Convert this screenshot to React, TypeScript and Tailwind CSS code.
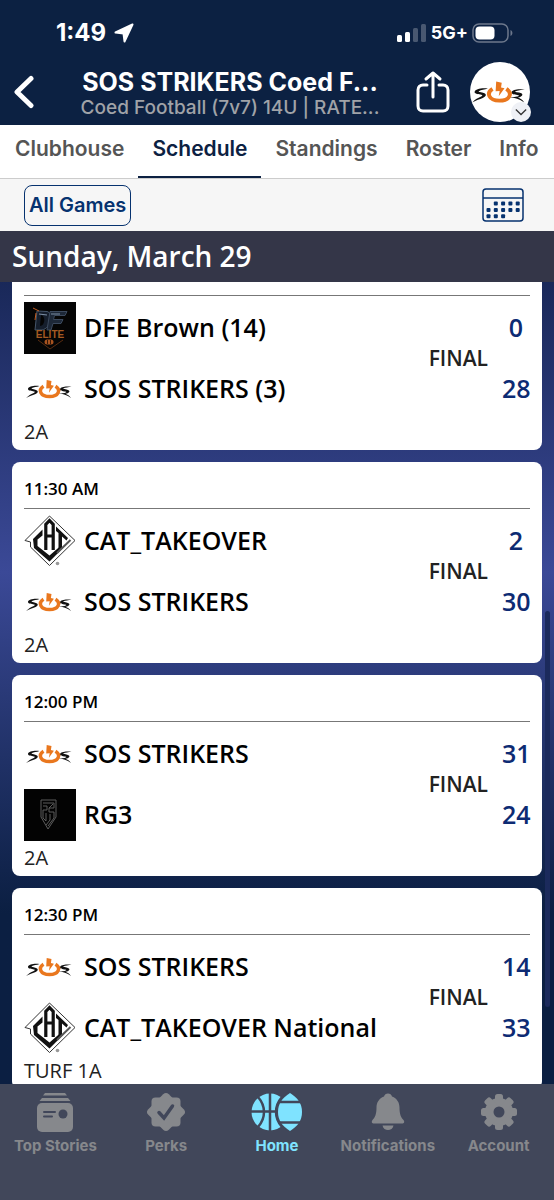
import type { ReactNode } from 'react';

type LogoName = 'sos' | 'cat' | 'dfe' | 'rg3';

interface Team {
  name: string;
  logo: LogoName;
  score: number;
}

interface Game {
  id: number;
  time?: string;
  field: string;
  teams: [Team, Team];
}

const games: Game[] = [
  {
    id: 1,
    field: '2A',
    teams: [
      { name: 'DFE Brown (14)', logo: 'dfe', score: 0 },
      { name: 'SOS STRIKERS (3)', logo: 'sos', score: 28 },
    ],
  },
  {
    id: 2,
    time: '11:30 AM',
    field: '2A',
    teams: [
      { name: 'CAT_TAKEOVER', logo: 'cat', score: 2 },
      { name: 'SOS STRIKERS', logo: 'sos', score: 30 },
    ],
  },
  {
    id: 3,
    time: '12:00 PM',
    field: '2A',
    teams: [
      { name: 'SOS STRIKERS', logo: 'sos', score: 31 },
      { name: 'RG3', logo: 'rg3', score: 24 },
    ],
  },
  {
    id: 4,
    time: '12:30 PM',
    field: 'TURF 1A',
    teams: [
      { name: 'SOS STRIKERS', logo: 'sos', score: 14 },
      { name: 'CAT_TAKEOVER National', logo: 'cat', score: 33 },
    ],
  },
];

const tabs = ['Clubhouse', 'Schedule', 'Standings', 'Roster', 'Info'];

function SosLogo() {
  return (
    <svg viewBox="0 0 52 52" className="size-full" fill="none">
      <path d="M15.500 23c-5-.8-11 .3-11.500 2.800-.3 1.700 2.500 2 5 2.400 2.500.4 2 1.200.2 2C7 31.200 4.500 32.500 2 35c3.500-1.800 6.500-2.800 9-3.800 3.500-1.400 4-4-.5-4.800-3-.5-3.500-.7-2.500-1.300 1.500-.8 4.500-1.100 7.500-2.100z" fill="#111" />
      <path d="M47.500 24c-5-1-11-.2-11.500 2.200-.3 1.700 2.500 1.900 5 2.300 2 .3 1.500 1-.3 1.400-2 .4-4.200.5-6.700.4 5 .6 9 1.700 13 4.700-1.500-2.300-3.500-3.500-5.500-4.200 4.500-.8 5.500-3.600 1-4.400-3-.5-4-.6-3-1.100 1.500-.7 5-1.300 8-1.300z" fill="#111" />
      <path d="M19.500 23.300c-5.500 3.500-3.500 10.200 6 10.200s11.500-6.700 6-10.200" stroke="#e9771e" strokeWidth="3.400" />
      <path d="m22.700 17 4.800 1-.6 4 3 .7-5 7 .8-4.500-3.500.2z" fill="#e9771e" />
    </svg>
  );
}

function CatLogo() {
  return (
    <svg viewBox="0 0 52 52" className="size-full" fill="none">
      <path d="m25.500 1 25.500 24.500-25.500 25L6.500 32v-5L1 25.500z" stroke="#333" strokeWidth="1" />
      <path d="m18.500 14.500-9.500 9.500 1 9 15.500 13.500L39 33l-2.500-2-11 9.500L13.500 31v-6.500l5-4z" fill="#111" />
      <path d="M21.800 35V9.500l3.700-4 3.700 4V35M21.800 21h7" stroke="#111" strokeWidth="3.200" />
      <path d="m32 11.500 12 11.500-1.500 2.500-4.500-4v10.500L34.500 35V18l-2.500-2z" fill="#111" />
      <path d="m33 38 13.500-13" stroke="#555" strokeWidth="2" />
      <circle cx="33.500" cy="48.500" r="1.800" fill="#999" />
    </svg>
  );
}

function DfeLogo() {
  return (
    <svg viewBox="0 0 52 52" className="size-full">
      <path d="M0 0h52v52H0z" fill="#050505" />
      <path d="m13 9 10 .5c6 1 4 17-5 18.500h-7l2-19z" fill="#151e2c" stroke="#46566b" />
      <path d="m17 13-1 11c5 0 6-10 1-11z" fill="#050505" />
      <path d="M26 9.500h17l-2 4H30.500l-1 4H39l-2 4h-8L27 28h-4z" fill="#1d2838" stroke="#3c4a5e" />
      <path d="m15 12 8 1M27 12h9" stroke="#7e90a6" strokeWidth="1" />
      <path d="m9 6 6 3M12 11l-1 7" stroke="#c65d20" strokeWidth="1" />
      <text x="26" y="36" textAnchor="middle" fill="#a55a22" className="font-['Liberation_Sans',sans-serif] text-[10px] font-bold">
        ELITE
      </text>
      <path d="m14 38 12 9 13-9" fill="none" stroke="#5a2c10" />
      <rect x="20.500" y="37.500" width="9" height="5" rx="2.500" fill="#a75320" />
      <path d="M23.500 38v4M26.500 38v4" stroke="#351707" />
    </svg>
  );
}

function Rg3Logo() {
  return (
    <svg viewBox="0 0 52 52" className="size-full" fill="none" stroke="#5c5c5c" strokeWidth="1">
      <path d="M0 0h52v52H0z" fill="#030303" stroke="none" />
      <path d="M17 11h15v17l-8 12-7-12zM19 14h11v5h-5v4h5v6l-6 8M19 17h4v4h-4v8l3 3v-8M25 19l4-4M26 25v6l-4 5" />
    </svg>
  );
}

const logos: Record<LogoName, ReactNode> = {
  sos: <SosLogo />,
  cat: <CatLogo />,
  dfe: <DfeLogo />,
  rg3: <Rg3Logo />,
};

function StatusBar() {
  return (
    <div className="flex h-[62px] items-center justify-between pl-14 pr-10 pt-1 text-white">
      <div className="flex items-center gap-2">
        <span className="text-2xl font-bold">1:49</span>
        <svg viewBox="0 0 20 20" className="size-5" fill="currentColor" stroke="currentColor" strokeWidth="2" strokeLinejoin="round">
          <path d="M18.500 1.500 1.500 9.500l8 1 1 8z" />
        </svg>
      </div>
      <div className="flex items-center gap-1">
        <svg viewBox="0 0 30 18" className="h-[18px] w-[30px]" fill="currentColor">
          <rect x="0" y="11" width="5" height="7" rx="1.500" />
          <rect x="8" y="8" width="5" height="10" rx="1.500" />
          <rect x="16" y="4" width="5" height="14" rx="1.500" opacity=".25" />
          <rect x="24" y="0" width="5" height="18" rx="1.500" opacity=".25" />
        </svg>
        <span className="text-lg font-bold">5G+</span>
        <svg viewBox="0 0 42 20" className="h-5 w-[42px]" fill="none">
          <rect x="1" y="1" width="35" height="18" rx="6" stroke="#6d788c" strokeWidth="1.500" />
          <rect x="3.500" y="3.500" width="19" height="13" rx="4" fill="#fff" />
          <path d="M38.500 7c2.500 1 2.500 5 0 6z" fill="#6d788c" />
        </svg>
      </div>
    </div>
  );
}

function Header() {
  return (
    <header className="bg-[#0c2142] pb-[3px]">
      <StatusBar />
      <div className="flex h-[60px] items-center pl-3 pr-6">
        <button aria-label="Back" className="w-8 shrink-0 text-white">
          <svg viewBox="0 0 24 34" className="h-[34px] w-6" fill="none" stroke="currentColor" strokeWidth="5" strokeLinecap="round" strokeLinejoin="round">
            <path d="M19 3.500 5 17l14 13.500" />
          </svg>
        </button>
        <div className="min-w-0 flex-1 px-4 pt-1 text-center">
          <h1 className="whitespace-nowrap text-[25px] font-bold leading-7 text-white">SOS STRIKERS Coed F...</h1>
          <p className="whitespace-nowrap text-[19px] font-medium leading-6 text-[#a0a3a8]">
            Coed Football (7v7) 14U | RATE...
          </p>
        </div>
        <button aria-label="Share" className="mr-5 shrink-0 text-white">
          <svg viewBox="0 0 34 42" className="h-[42px] w-[34px]" fill="none" stroke="currentColor" strokeWidth="3" strokeLinecap="round" strokeLinejoin="round">
            <path d="M11 14H7c-3 0-5 2-5 5v16c0 3 2 5 5 5h20c3 0 5-2 5-5V19c0-3-2-5-5-5h-4M17 26V2M10 8l7-6 7 6" />
          </svg>
        </button>
        <button aria-label="Team menu" className="relative size-[60px] shrink-0 rounded-full bg-white">
          <SosLogo />
          <span className="absolute -right-px bottom-0 flex size-5 items-center justify-center rounded-full bg-[#eff1f6]">
            <svg viewBox="0 0 14 8" className="h-2 w-3" fill="none" stroke="#333" strokeWidth="1.500">
              <path d="m1 1 6 6 6-6" />
            </svg>
          </span>
        </button>
      </div>
    </header>
  );
}

function Tabs() {
  return (
    <nav className="flex h-[54px] shrink-0 overflow-hidden border-b border-[#ccc] bg-white pl-px text-[21px] font-semibold text-[#555]">
      {tabs.map((tab) => (
        <button
          key={tab}
          className={
            tab === 'Schedule'
              ? 'shrink-0 border-b-2 border-[#0c2142] px-3.5 pb-1 text-[#0c2142]'
              : 'shrink-0 px-3.5 pb-1.5'
          }
        >
          {tab}
        </button>
      ))}
    </nav>
  );
}

function CalendarIcon() {
  const rows = [
    [1, 2, 3, 4],
    [0, 1, 2, 3, 4],
    [0, 1, 2],
  ];
  return (
    <svg viewBox="0 0 42 34" className="h-[34px] w-[42px]" fill="none" stroke="currentColor" strokeWidth="1.500">
      <rect x="1" y="1" width="40" height="32" rx="3" />
      <path d="M1 10h40" />
      {rows.map((cols, y) =>
        cols.map((x) => (
          <rect key={`${x}-${y}`} x={4.5 + x * 7.3} y={13.5 + y * 6.4} width="4" height="4" rx="1" fill="currentColor" stroke="none" />
        ))
      )}
    </svg>
  );
}

function Toolbar() {
  return (
    <div className="flex h-[52px] shrink-0 items-center justify-between bg-[#f6f6f6] pl-6 pr-[30px] text-[#06326f]">
      <button className="h-[41px] rounded-lg border border-[#06326f] px-1 text-xl font-semibold">All Games</button>
      <button aria-label="Calendar">
        <CalendarIcon />
      </button>
    </div>
  );
}

function TeamRow({ team }: { team: Team }) {
  return (
    <div className="flex h-[61px] items-center gap-2">
      <div className="size-[52px] shrink-0">{logos[team.logo]}</div>
      <span className="flex-1 whitespace-nowrap text-[25px] font-semibold text-black">{team.name}</span>
      <span className="w-7 text-center text-[25px] font-semibold text-[#0d2b73]">{team.score}</span>
    </div>
  );
}

function GameCard({ game }: { game: Game }) {
  return (
    <article className="rounded-lg bg-white px-3 pb-[5px]">
      <div className="h-[47px] border-b border-[#777] pt-[15px] text-[17px] font-semibold leading-6 text-black">{game.time}</div>
      <div className="relative pt-px">
        <TeamRow team={game.teams[0]} />
        <TeamRow team={game.teams[1]} />
        <span className="absolute right-[42px] top-12 text-[21px] font-semibold leading-7 text-[#222]">FINAL</span>
      </div>
      <p className="text-xl leading-[26px] text-[#222]">{game.field}</p>
    </article>
  );
}

function StoriesIcon() {
  return (
    <svg viewBox="0 0 40 40" className="size-10" fill="currentColor">
      <path d="M10 1h20l2 2.500H8zM7 6h26l2.500 3h-31z" />
      <rect x="2" y="11" width="36" height="29" rx="5" />
      <path d="M9 20h11M9 24.500h8" className="stroke-[#41475a]" strokeWidth="2" strokeLinecap="round" />
      <circle cx="28" cy="22" r="4.500" className="fill-[#41475a]" />
    </svg>
  );
}

function PerksIcon() {
  return (
    <svg viewBox="0 0 40 40" className="size-10" fill="currentColor">
      <rect x="5.500" y="5.500" width="29" height="29" rx="4" />
      <rect x="5.500" y="5.500" width="29" height="29" rx="4" transform="rotate(45 20 20)" />
      <path d="m13 20.500 5 5.500 8.500-12" fill="none" className="stroke-[#41475a]" strokeWidth="3.500" strokeLinecap="round" />
    </svg>
  );
}

function HomeIcon() {
  return (
    <svg viewBox="0 0 52 40" className="h-10 w-[52px]" fill="currentColor">
      <circle cx="19" cy="20" r="18.500" />
      <g fill="none" className="stroke-[#41475a]" strokeWidth="2.500">
        <path d="M19 0v40M0 19.500h30M7 5c8 9 8 21 0 30M31 5c-8 9-8 21 0 30" />
      </g>
      <path
        d="M39 1c8 5 12 11 12 19s-4 14-12 19c-8-5-12-11-12-19S31 6 39 1z"
        className="stroke-[#41475a]"
        strokeWidth="3"
        paintOrder="stroke"
      />
      <path d="M28 10h22M28 30.500h22" className="stroke-[#41475a]" strokeWidth="2.500" />
    </svg>
  );
}

function BellIcon() {
  return (
    <svg viewBox="0 0 40 40" className="size-10" fill="currentColor">
      <path d="M20 1.500c2 0 3.500 1 4 3 5 2 7.500 6 7.500 11 0 7 1.500 10 4 12.500 1.500 2 .5 3.500-1.500 3.500H6c-2 0-3-1.500-1.500-3.500 2.500-2.500 4-5.500 4-12.500 0-5 2.500-9 7.500-11 .5-2 2-3 4-3zM14.500 33.500h11c-1 6-10 6-11 0z" />
    </svg>
  );
}

function GearIcon() {
  return (
    <svg viewBox="0 0 40 40" className="size-10" fill="currentColor">
      <circle cx="20" cy="20" r="14" />
      {[0, 45, 90, 135].map((angle) => (
        <rect key={angle} x="16" y="2" width="8" height="36" rx="2.500" transform={`rotate(${angle} 20 20)`} />
      ))}
      <circle cx="20" cy="20" r="5.500" className="fill-[#41475a]" />
    </svg>
  );
}

const navItems = [
  { label: 'Top Stories', icon: <StoriesIcon /> },
  { label: 'Perks', icon: <PerksIcon /> },
  { label: 'Home', icon: <HomeIcon />, active: true },
  { label: 'Notifications', icon: <BellIcon /> },
  { label: 'Account', icon: <GearIcon /> },
];

function BottomNav() {
  return (
    <nav className="grid shrink-0 grid-cols-5 bg-[#41475a] pb-11 pt-2 text-[#86888c]">
      {navItems.map((item) => (
        <button
          key={item.label}
          className={item.active ? 'flex flex-col items-center gap-1 text-[#7fe3ff]' : 'flex flex-col items-center gap-1'}
        >
          {item.icon}
          <span className="whitespace-nowrap text-[15px] font-bold leading-5">{item.label}</span>
        </button>
      ))}
    </nav>
  );
}

export default function App() {
  return (
    <div className="flex h-screen flex-col overflow-hidden bg-[#0c2142] font-['Inter',sans-serif]">
      <Header />
      <Tabs />
      <Toolbar />
      <main className="relative flex min-h-0 flex-1 flex-col overflow-hidden bg-linear-to-b from-[#14234f] via-[#3b4997] via-40% to-[#0b1f42] to-80% font-['Open_Sans','Noto_Sans',sans-serif]">
        <h2 className="z-10 h-[51px] shrink-0 bg-[#343648] px-3 text-[28px] font-semibold leading-[51px] text-white">
          Sunday, March 29
        </h2>
        {/* first card is scrolled partly under the date bar */}
        <div className="-mt-[33px] flex flex-col gap-3 px-3">
          {games.map((game) => (
            <GameCard key={game.id} game={game} />
          ))}
        </div>
        <div className="absolute right-1 top-[380px] h-[396px] w-[5px] rounded-full bg-[#1b2a5c]" />
      </main>
      <BottomNav />
    </div>
  );
}
